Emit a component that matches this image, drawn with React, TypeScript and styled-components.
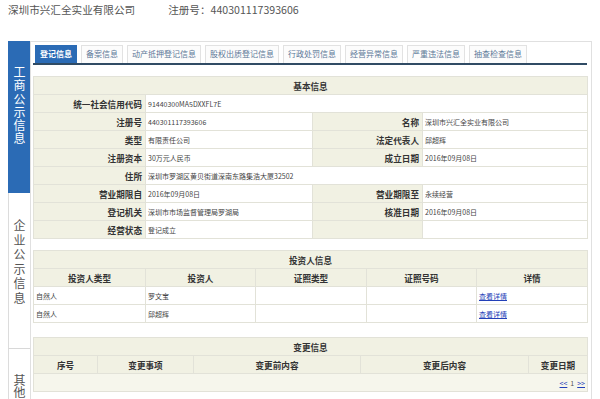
import React from "react";
import styled, { createGlobalStyle } from "styled-components";

const GlobalStyle = createGlobalStyle`
  html, body {
    margin: 0;
    padding: 0;
    background: #fff;
    font-family: "Noto Sans CJK SC", "Liberation Sans", sans-serif;
    color: #333;
  }
`;

const BLUE = "#2b6bb5";
const BEIGE = "#f1f1e3";
const LINE = "#e2e2d8";

interface Field {
  label: string;
  value: string;
}

const basicRows: (Field[])[] = [
  [{ label: "统一社会信用代码", value: "91440300MA5DXXFL7E" }],
  [
    { label: "注册号", value: "440301117393606" },
    { label: "名称", value: "深圳市兴汇全实业有限公司" },
  ],
  [
    { label: "类型", value: "有限责任公司" },
    { label: "法定代表人", value: "邱超辉" },
  ],
  [
    { label: "注册资本", value: "30万元人民币" },
    { label: "成立日期", value: "2016年09月08日" },
  ],
  [{ label: "住所", value: "深圳市罗湖区黄贝街道深南东路集浩大厦32502" }],
  [
    { label: "营业期限自", value: "2016年09月08日" },
    { label: "营业期限至", value: "永续经营" },
  ],
  [
    { label: "登记机关", value: "深圳市市场监督管理局罗湖局" },
    { label: "核准日期", value: "2016年09月08日" },
  ],
  [
    { label: "经营状态", value: "登记成立" },
    { label: "", value: "" },
  ],
];

const tabs = [
  "登记信息",
  "备案信息",
  "动产抵押登记信息",
  "股权出质登记信息",
  "行政处罚信息",
  "经营异常信息",
  "严重违法信息",
  "抽查检查信息",
];

const investors = [
  { type: "自然人", name: "罗文宝" },
  { type: "自然人", name: "邱超辉" },
];

const sideMenu = [
  { title: "工商公示信息", active: true, h: 152, pad: 24, step: 13.3 },
  { title: "企业公示信息", active: false, h: 156, pad: 25, step: 14.6 },
  { title: "其他", active: false, h: 60, pad: 25, step: 12 },
];

const Header = styled.div`
  height: 41px;
  padding: 3px 0 0 8px;
  box-sizing: border-box;
  font-size: 10.6px;
  line-height: 14px;
  color: #555;
  display: flex;
  gap: 33px;
`;

const Main = styled.div`
  display: flex;
  padding-left: 8px;
  height: 358px;
  overflow: hidden;
`;

const Sidebar = styled.div`
  width: 22px;
  display: flex;
  flex-direction: column;
`;

const SideBlock = styled.div<{ $active?: boolean; $h: number; $pad: number }>`
  height: ${(p) => p.$h}px;
  flex-shrink: 0;
  box-sizing: border-box;
  padding-top: ${(p) => p.$pad}px;
  display: flex;
  flex-direction: column;
  align-items: center;
  background: ${(p) => (p.$active ? BLUE : "#fff")};
  color: ${(p) => (p.$active ? "#fff" : "#555")};
  border-left: 1px solid ${(p) => (p.$active ? BLUE : "#dcdcdc")};
  border-bottom: ${(p) => (p.$active ? "none" : "1px solid #d8d8d8")};
`;

const SideChar = styled.span<{ $step: number }>`
  display: block;
  height: ${(p) => p.$step}px;
  line-height: ${(p) => p.$step}px;
  font-size: 12px;
`;

const Panel = styled.div`
  flex: 1;
  max-width: 562px;
  border: 1px solid #e0e0e0;
  border-bottom: none;
  box-sizing: border-box;
  padding: 2px 4px 0 2px;
`;

const TabBar = styled.div`
  display: flex;
  gap: 4px;
  padding-left: 2px;
  border-bottom: 2px solid #304b64;
  height: 20px;
  box-sizing: border-box;
  margin-top: 1px;
`;

const Tab = styled.div<{ $active?: boolean }>`
  height: 18px;
  box-sizing: border-box;
  padding: 0 4px;
  font-size: 8px;
  line-height: 16px;
  white-space: nowrap;
  border: 1px solid ${(p) => (p.$active ? BLUE : "#e2e2e2")};
  border-bottom: none;
  background: ${(p) => (p.$active ? BLUE : "#fcfcfc")};
  color: ${(p) => (p.$active ? "#fff" : "#5d7898")};
  font-weight: ${(p) => (p.$active ? "bold" : "normal")};
`;

const Table = styled.table<{ $mt: number }>`
  width: 554px;
  margin-top: ${(p) => p.$mt}px;
  border-collapse: collapse;
  table-layout: fixed;

  th,
  td {
    box-sizing: border-box;
    height: 18px;
    line-height: 10px;
    border: 1px solid ${LINE};
  }
`;

const Caption = styled.th`
  padding: 0;
  background: ${BEIGE};
  font-size: 8.6px;
  font-weight: bold;
  color: #333;
  text-align: center;
`;

const Label = styled.th`
  padding: 0 3px 0 0;
  background: ${BEIGE};
  font-size: 8.6px;
  font-weight: bold;
  text-align: right;
  color: #333;
  white-space: nowrap;
`;

const Value = styled.td`
  padding: 0 0 0 2px;
  background: #fff;
  font-size: 7px;
  color: #444;
  white-space: nowrap;
`;

const ColHead = styled.th`
  padding: 0;
  background: ${BEIGE};
  font-size: 8.6px;
  font-weight: bold;
  text-align: center;
  color: #333;
`;

const Link = styled.a`
  color: #2340b8;
  text-decoration: underline;
  font-size: 7px;
  cursor: pointer;
`;

const PagerCell = styled.td`
  padding: 0 2px 0 0;
  background: #f6f6ec;
  text-align: right;
  font-size: 7px;
  color: #2340b8;
  white-space: nowrap;
`;

const PageArrow = styled.span`
  text-decoration: underline;
`;

const PageNum = styled.span`
  margin: 0 3px;
  color: #555;
`;

function BasicTable() {
  return (
    <Table $mt={11}>
      <colgroup>
        <col style={{ width: 112 }} />
        <col style={{ width: 167 }} />
        <col style={{ width: 110 }} />
        <col style={{ width: 165 }} />
      </colgroup>
      <thead>
        <tr>
          <Caption colSpan={4}>基本信息</Caption>
        </tr>
      </thead>
      <tbody>
        {basicRows.map((row, i) => (
          <tr key={i}>
            {row.length === 1 ? (
              <>
                <Label>{row[0].label}</Label>
                <Value colSpan={3}>{row[0].value}</Value>
              </>
            ) : (
              row.map((f, j) => (
                <React.Fragment key={j}>
                  <Label>{f.label}</Label>
                  <Value>{f.value}</Value>
                </React.Fragment>
              ))
            )}
          </tr>
        ))}
      </tbody>
    </Table>
  );
}

function InvestorTable() {
  return (
    <Table $mt={11}>
      <colgroup>
        <col style={{ width: 112 }} />
        <col style={{ width: 110 }} />
        <col style={{ width: 111 }} />
        <col style={{ width: 110 }} />
        <col style={{ width: 111 }} />
      </colgroup>
      <thead>
        <tr>
          <Caption colSpan={5}>投资人信息</Caption>
        </tr>
        <tr>
          <ColHead>投资人类型</ColHead>
          <ColHead>投资人</ColHead>
          <ColHead>证照类型</ColHead>
          <ColHead>证照号码</ColHead>
          <ColHead>详情</ColHead>
        </tr>
      </thead>
      <tbody>
        {investors.map((inv, i) => (
          <tr key={i}>
            <Value>{inv.type}</Value>
            <Value>{inv.name}</Value>
            <Value />
            <Value />
            <Value>
              <Link>查看详情</Link>
            </Value>
          </tr>
        ))}
      </tbody>
    </Table>
  );
}

function ChangeTable() {
  return (
    <Table $mt={14}>
      <colgroup>
        <col style={{ width: 64 }} />
        <col style={{ width: 96 }} />
        <col style={{ width: 167 }} />
        <col style={{ width: 168 }} />
        <col style={{ width: 59 }} />
      </colgroup>
      <thead>
        <tr>
          <Caption colSpan={5}>变更信息</Caption>
        </tr>
        <tr>
          <ColHead>序号</ColHead>
          <ColHead>变更事项</ColHead>
          <ColHead>变更前内容</ColHead>
          <ColHead>变更后内容</ColHead>
          <ColHead>变更日期</ColHead>
        </tr>
      </thead>
      <tbody>
        <tr>
          <PagerCell colSpan={5}>
            <PageArrow>&lt;&lt;</PageArrow>
            <PageNum>1</PageNum>
            <PageArrow>&gt;&gt;</PageArrow>
          </PagerCell>
        </tr>
      </tbody>
    </Table>
  );
}

export default function App() {
  return (
    <>
      <GlobalStyle />
      <Header>
        <span>深圳市兴汇全实业有限公司</span>
        <span>注册号：440301117393606</span>
      </Header>
      <Main>
        <Sidebar>
          {sideMenu.map((m) => (
            <SideBlock key={m.title} $active={m.active} $h={m.h} $pad={m.pad}>
              {Array.from(m.title).map((ch, i) => (
                <SideChar key={i} $step={m.step}>
                  {ch}
                </SideChar>
              ))}
            </SideBlock>
          ))}
        </Sidebar>
        <Panel>
          <TabBar>
            {tabs.map((t, i) => (
              <Tab key={t} $active={i === 0}>
                {t}
              </Tab>
            ))}
          </TabBar>
          <BasicTable />
          <InvestorTable />
          <ChangeTable />
        </Panel>
      </Main>
    </>
  );
}
